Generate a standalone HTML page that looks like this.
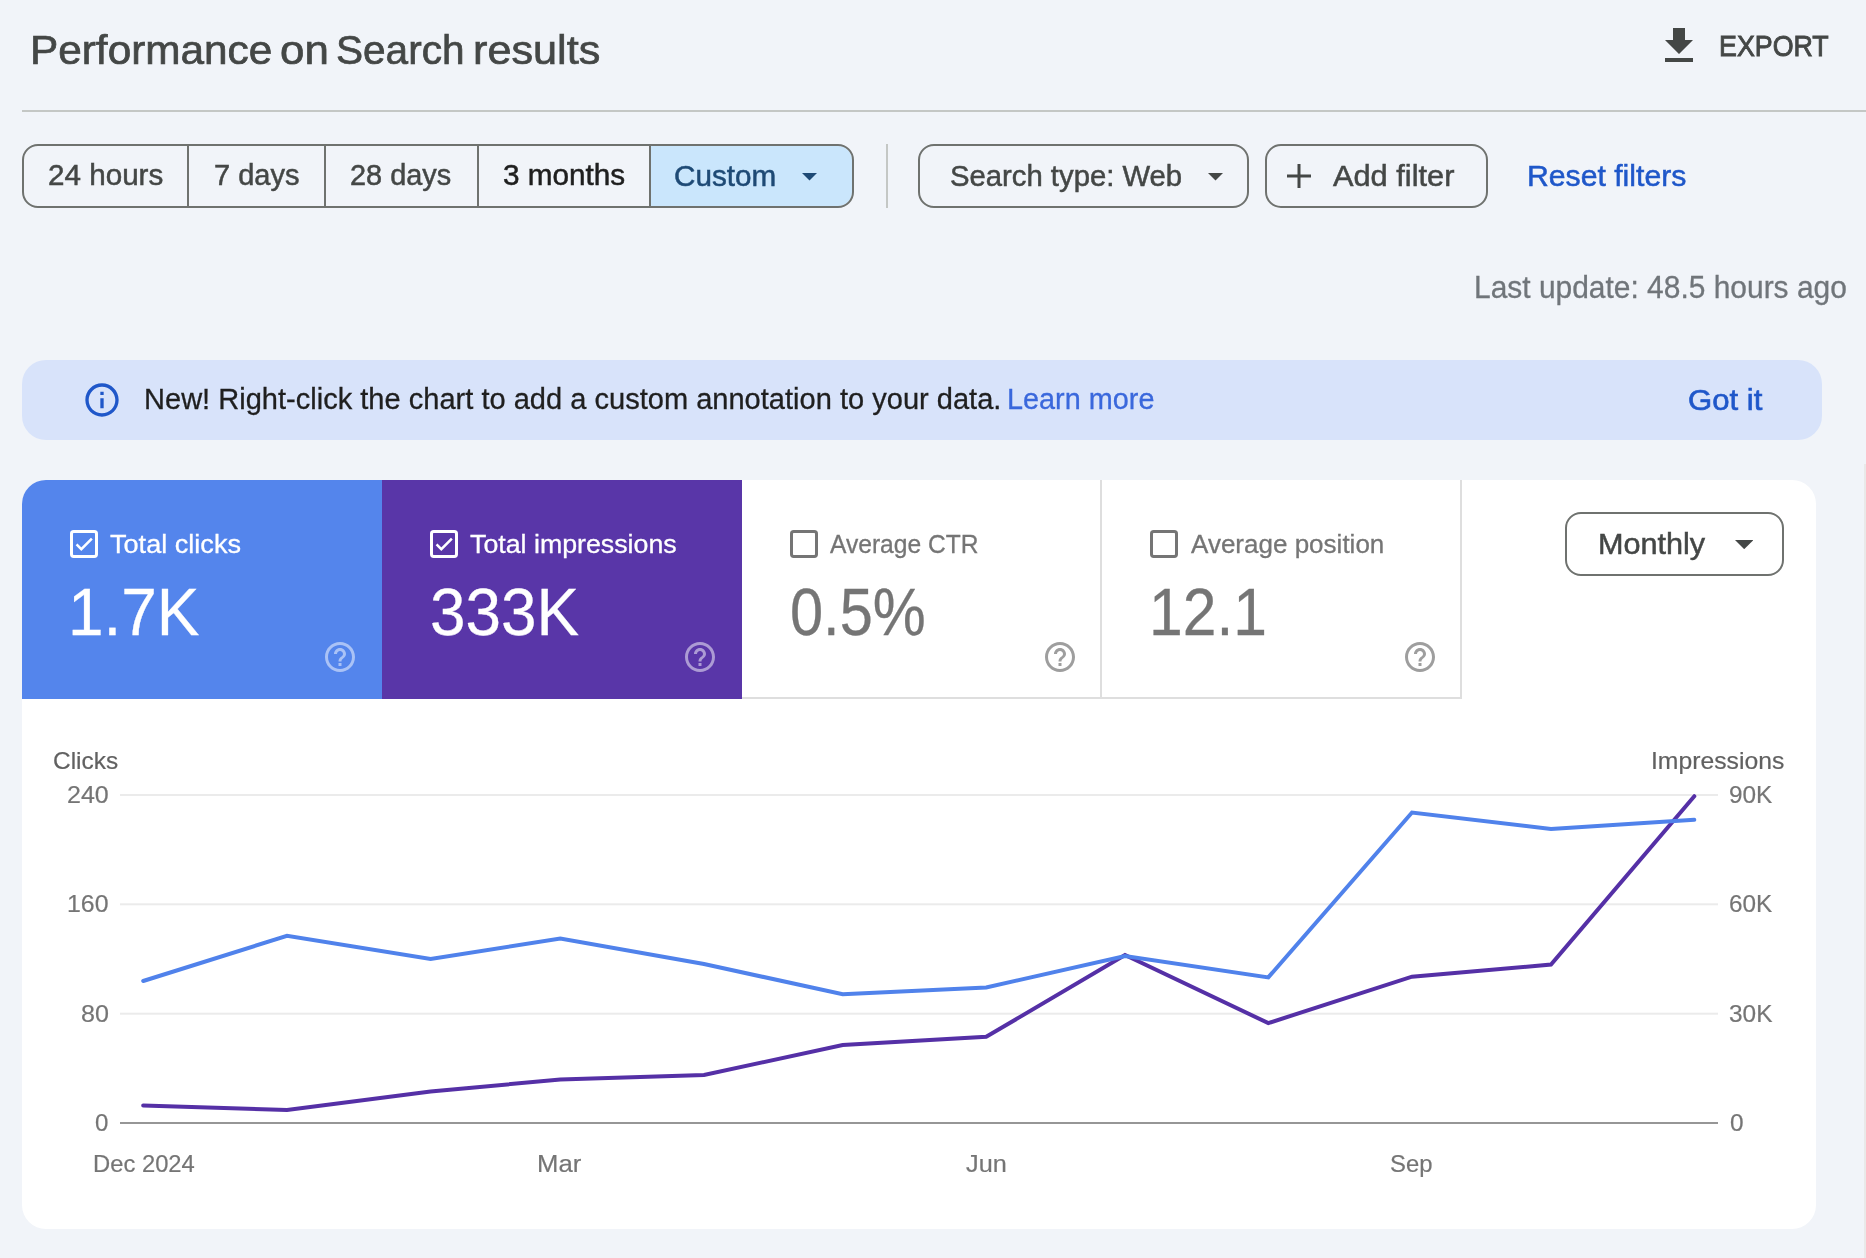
<!DOCTYPE html>
<html lang="en"><head><meta charset="utf-8"><title>Performance on Search results</title>
<style>
html,body{margin:0;padding:0}
body{width:1866px;height:1258px;position:relative;overflow:hidden;background:#f1f4f9;font-family:"Liberation Sans",sans-serif}
.a{position:absolute;display:block}
.t{position:absolute;white-space:nowrap;line-height:1;transform-origin:0 0}
.chip{position:absolute;box-sizing:border-box;border:2px solid #6f726f;border-radius:16px;height:64px}
</style></head><body>
<!-- header -->
<div class="a" style="left:22px;top:110px;width:1844px;height:2px;background:#c4c7c5"></div>
<svg class="a" style="left:1655px;top:22.200px" width="48" height="48" viewBox="0 0 24 24"><path fill="#444746" d="M19 9h-4V3H9v6H5l7 7 7-7zM5 18v2h14v-2H5z"/></svg>
<!-- date range segmented buttons -->
<div class="a" style="left:651px;top:146px;width:201px;height:60px;background:#cae6fc;border-radius:0 14px 14px 0"></div>
<div class="chip" style="left:22px;top:144px;width:832px"></div>
<div class="a" style="left:187px;top:146px;width:2px;height:60px;background:#6f726f"></div>
<div class="a" style="left:324px;top:146px;width:2px;height:60px;background:#6f726f"></div>
<div class="a" style="left:477px;top:146px;width:2px;height:60px;background:#6f726f"></div>
<div class="a" style="left:649px;top:146px;width:2px;height:60px;background:#6f726f"></div>
<svg class="a" style="left:802.40px;top:173px" width="15" height="7.5" viewBox="0 0 10 5"><path d="M0 0h10L5 5z" fill="#1e4a75"/></svg>
<div class="a" style="left:886px;top:144px;width:2px;height:64px;background:#c4c7c5"></div>
<div class="chip" style="left:918px;top:144px;width:331px"></div>
<svg class="a" style="left:1207.80px;top:173px" width="15" height="7.5" viewBox="0 0 10 5"><path d="M0 0h10L5 5z" fill="#444746"/></svg>
<div class="chip" style="left:1265px;top:144px;width:223px"></div>
<svg class="a" style="left:1287.300px;top:164.100px" width="24" height="24" viewBox="0 0 24 24"><path d="M12 0v24M0 12h24" stroke="#444746" stroke-width="3" fill="none"/></svg>
<!-- banner -->
<div class="a" style="left:22px;top:360px;width:1800px;height:80px;border-radius:24px;background:#d8e3fa"></div>
<svg class="a" style="left:81.700px;top:379.800px" width="40" height="40" viewBox="0 0 24 24"><path fill="#1f57c9" d="M11 7h2v2h-2zm0 4h2v6h-2zm1-9C6.480 2 2 6.480 2 12s4.480 10 10 10 10-4.480 10-10S17.520 2 12 2zm0 18c-4.410 0-8-3.590-8-8s3.590-8 8-8 8 3.590 8 8-3.590 8-8 8z"/></svg>
<!-- card -->
<div class="a" style="left:22px;top:480px;width:1794px;height:749px;border-radius:24px;background:#fff;overflow:hidden">
  <div class="a" style="left:0;top:0;width:360px;height:219px;background:#5485ec"></div>
  <div class="a" style="left:360px;top:0;width:360px;height:219px;background:#5936a8"></div>
  <div class="a" style="left:720px;top:217px;width:720px;height:2px;background:#dedede"></div>
  <div class="a" style="left:1078px;top:0;width:2px;height:219px;background:#dedede"></div>
  <div class="a" style="left:1438px;top:0;width:2px;height:219px;background:#dedede"></div>
</div>
<svg class="a" style="left:70px;top:530px" width="28" height="28" viewBox="0 0 28 28"><rect x="1.5" y="1.5" width="25" height="25" rx="2.200" ry="2.200" fill="none" stroke="#fff" stroke-width="3"/><path d="M6.570 14.310 L11.330 19.200 L21.860 8.550" fill="none" stroke="#fff" stroke-width="2.500"/></svg>
<svg class="a" style="left:430px;top:530px" width="28" height="28" viewBox="0 0 28 28"><rect x="1.5" y="1.5" width="25" height="25" rx="2.200" ry="2.200" fill="none" stroke="#fff" stroke-width="3"/><path d="M6.570 14.310 L11.330 19.200 L21.860 8.550" fill="none" stroke="#fff" stroke-width="2.500"/></svg>
<svg class="a" style="left:790px;top:530px" width="28" height="28" viewBox="0 0 28 28"><rect x="1.5" y="1.5" width="25" height="25" rx="2.200" ry="2.200" fill="none" stroke="#757575" stroke-width="3"/></svg>
<svg class="a" style="left:1150px;top:530px" width="28" height="28" viewBox="0 0 28 28"><rect x="1.5" y="1.5" width="25" height="25" rx="2.200" ry="2.200" fill="none" stroke="#757575" stroke-width="3"/></svg>
<svg class="a" style="left:322px;top:639px" width="36" height="36" viewBox="0 0 24 24"><path fill="#fff" fill-opacity="0.5" d="M11 18h2v-2h-2v2zm1-16C6.48 2 2 6.48 2 12s4.480 10 10 10 10-4.480 10-10S17.520 2 12 2zm0 18c-4.410 0-8-3.590-8-8s3.590-8 8-8 8 3.590 8 8-3.590 8-8 8zm0-14c-2.210 0-4 1.790-4 4h2c0-1.100.900-2 2-2s2 .900 2 2c0 2-3 1.750-3 5h2c0-2.250 3-2.500 3-5 0-2.210-1.790-4-4-4z"/></svg>
<svg class="a" style="left:682px;top:639px" width="36" height="36" viewBox="0 0 24 24"><path fill="#fff" fill-opacity="0.5" d="M11 18h2v-2h-2v2zm1-16C6.48 2 2 6.48 2 12s4.480 10 10 10 10-4.480 10-10S17.520 2 12 2zm0 18c-4.410 0-8-3.590-8-8s3.590-8 8-8 8 3.590 8 8-3.590 8-8 8zm0-14c-2.210 0-4 1.790-4 4h2c0-1.100.900-2 2-2s2 .900 2 2c0 2-3 1.750-3 5h2c0-2.250 3-2.500 3-5 0-2.210-1.790-4-4-4z"/></svg>
<svg class="a" style="left:1042px;top:639px" width="36" height="36" viewBox="0 0 24 24"><path fill="#9e9e9e" fill-opacity="1" d="M11 18h2v-2h-2v2zm1-16C6.48 2 2 6.48 2 12s4.480 10 10 10 10-4.480 10-10S17.520 2 12 2zm0 18c-4.410 0-8-3.590-8-8s3.590-8 8-8 8 3.590 8 8-3.590 8-8 8zm0-14c-2.210 0-4 1.790-4 4h2c0-1.100.900-2 2-2s2 .900 2 2c0 2-3 1.750-3 5h2c0-2.250 3-2.500 3-5 0-2.210-1.790-4-4-4z"/></svg>
<svg class="a" style="left:1402px;top:639px" width="36" height="36" viewBox="0 0 24 24"><path fill="#9e9e9e" fill-opacity="1" d="M11 18h2v-2h-2v2zm1-16C6.48 2 2 6.48 2 12s4.480 10 10 10 10-4.480 10-10S17.520 2 12 2zm0 18c-4.410 0-8-3.590-8-8s3.590-8 8-8 8 3.590 8 8-3.590 8-8 8zm0-14c-2.210 0-4 1.790-4 4h2c0-1.100.900-2 2-2s2 .900 2 2c0 2-3 1.750-3 5h2c0-2.250 3-2.500 3-5 0-2.210-1.790-4-4-4z"/></svg>
<div class="chip" style="left:1565px;top:512px;width:219px"></div>
<svg class="a" style="left:1734.50px;top:540.2px" width="18.4" height="9.2" viewBox="0 0 10 5"><path d="M0 0h10L5 5z" fill="#444746"/></svg>
<!-- chart -->
<svg class="a" style="left:0;top:700px" width="1866" height="500" viewBox="0 700 1866 500">
  <g fill="#ebebeb"><rect x="120" y="794" width="1598" height="2"/><rect x="120" y="903.300" width="1598" height="2"/><rect x="120" y="1012.700" width="1598" height="2"/></g>
  <rect x="120" y="1122" width="1598" height="2" fill="#969696"/>
  <polyline points="143.2,1105.4 287.0,1110.0 430.6,1091.4 560.3,1079.6 704.0,1075.0 842.7,1045.1 986.2,1036.8 1125.0,955.0 1268.3,1023.1 1412.0,976.7 1551.0,964.6 1694.3,796.2" fill="none" stroke="#5530a6" stroke-width="4" stroke-linejoin="miter" stroke-linecap="round"/>
  <polyline points="143.2,981.0 287.0,935.8 430.6,959.0 560.3,938.6 704.0,964.0 842.7,994.3 986.2,987.5 1125.0,956.0 1268.3,977.4 1412.0,812.5 1551.0,829.0 1694.3,819.8" fill="none" stroke="#5082eb" stroke-width="4" stroke-linejoin="miter" stroke-linecap="round"/>
</svg>
<!-- scrollbar sliver -->
<div class="a" style="left:1864px;top:464px;width:2px;height:794px;background:#e9e9e9"></div>
<!-- text -->
<div class="a" id="txt" style="left:0;top:0;width:1866px;height:1258px;will-change:transform">
<h1 style="margin:0;font-weight:400"><span class="t" style="left:30px;top:30px;font-size:40.5px;color:#444746;-webkit-text-stroke:0.7px #444746;transform:scaleX(1.0452)">Performance</span> <span class="t" style="left:280px;top:30px;font-size:40.5px;color:#444746;-webkit-text-stroke:0.7px #444746;transform:scaleX(1.0827)">on</span> <span class="t" style="left:336px;top:30px;font-size:40.5px;color:#444746;-webkit-text-stroke:0.7px #444746;transform:scaleX(1.0012)">Search</span> <span class="t" style="left:473px;top:30px;font-size:40.5px;color:#444746;-webkit-text-stroke:0.7px #444746;transform:scaleX(1.0672)">results</span></h1>
<div class="t" style="left:1719px;top:32px;font-size:29px;color:#444746;-webkit-text-stroke:0.9px #444746;transform:scaleX(0.9242)">EXPORT</div>
<div class="t" style="left:48px;top:161px;font-size:29px;color:#444746;-webkit-text-stroke:0.5px #444746;transform:scaleX(1.0216)">24 hours</div>
<div class="t" style="left:214px;top:161px;font-size:29px;color:#444746;-webkit-text-stroke:0.5px #444746;transform:scaleX(1.0010)">7 days</div>
<div class="t" style="left:350px;top:161px;font-size:29px;color:#444746;-webkit-text-stroke:0.5px #444746;transform:scaleX(0.9963)">28 days</div>
<div class="t" style="left:503px;top:161px;font-size:29px;color:#1f1f1f;-webkit-text-stroke:0.5px #1f1f1f;transform:scaleX(1.0246)">3 months</div>
<div class="t" style="left:674px;top:162px;font-size:29px;color:#1e4a75;-webkit-text-stroke:0.5px #1e4a75;transform:scaleX(1.0229)">Custom</div>
<div class="t" style="left:950px;top:162px;font-size:29px;color:#444746;-webkit-text-stroke:0.5px #444746;transform:scaleX(1.0093)">Search type: Web</div>
<div class="t" style="left:1333px;top:162px;font-size:29px;color:#444746;-webkit-text-stroke:0.5px #444746;transform:scaleX(1.0607)">Add filter</div>
<div class="t" style="left:1527px;top:162px;font-size:29px;color:#1f57c9;-webkit-text-stroke:0.5px #1f57c9;transform:scaleX(1.0408)">Reset filters</div>
<div class="t" style="left:1474px;top:272px;font-size:30.5px;color:#70757a;-webkit-text-stroke:0.3px #70757a;transform:scaleX(0.9816)">Last update: 48.5 hours ago</div>
<div class="t" style="left:144px;top:385px;font-size:28.6px;color:#1f1f1f;-webkit-text-stroke:0.3px #1f1f1f;transform:scaleX(1.0159)">New! Right-click the chart to add a custom annotation to your data.</div>
<div class="t" style="left:1007px;top:385px;font-size:28.6px;color:#3a68dc;-webkit-text-stroke:0.3px #3a68dc;transform:scaleX(1.0082)">Learn more</div>
<div class="t" style="left:1688px;top:386px;font-size:29px;color:#1f57c9;-webkit-text-stroke:0.6px #1f57c9;transform:scaleX(1.0722)">Got it</div>
<div class="t" style="left:110px;top:531px;font-size:26.5px;color:#fff;-webkit-text-stroke:0.3px #fff;transform:scaleX(1.0224)">Total clicks</div>
<div class="t" style="left:68px;top:579px;font-size:66px;color:#fff;-webkit-text-stroke:0.3px #fff;transform:scaleX(0.9683)">1.7K</div>
<div class="t" style="left:470px;top:531px;font-size:26.5px;color:#fff;-webkit-text-stroke:0.3px #fff;transform:scaleX(1.0095)">Total impressions</div>
<div class="t" style="left:430px;top:579px;font-size:66px;color:#fff;-webkit-text-stroke:0.3px #fff;transform:scaleX(0.9665)">333K</div>
<div class="t" style="left:830px;top:531px;font-size:26.5px;color:#757575;-webkit-text-stroke:0.3px #757575;transform:scaleX(0.9278)">Average CTR</div>
<div class="t" style="left:790px;top:579px;font-size:66px;color:#757575;-webkit-text-stroke:0.3px #757575;transform:scaleX(0.9019)">0.5%</div>
<div class="t" style="left:1191px;top:531px;font-size:26.5px;color:#757575;-webkit-text-stroke:0.3px #757575;transform:scaleX(0.9817)">Average position</div>
<div class="t" style="left:1149px;top:579px;font-size:66px;color:#757575;-webkit-text-stroke:0.3px #757575;transform:scaleX(0.9183)">12.1</div>
<div class="t" style="left:1598px;top:530px;font-size:29px;color:#444746;-webkit-text-stroke:0.5px #444746;transform:scaleX(1.0552)">Monthly</div>
<div class="t" style="left:53px;top:749px;font-size:24.5px;color:#616161;-webkit-text-stroke:0.2px #616161;transform:scaleX(0.9974)">Clicks</div>
<div class="t" style="left:1651px;top:749px;font-size:24.5px;color:#616161;-webkit-text-stroke:0.2px #616161;transform:scaleX(1.0089)">Impressions</div>
<div class="t" style="left:67px;top:783px;font-size:24.8px;color:#757575;-webkit-text-stroke:0.2px #757575;transform:scaleX(1.0086)">240</div>
<div class="t" style="left:67px;top:892px;font-size:24.8px;color:#757575;-webkit-text-stroke:0.2px #757575;transform:scaleX(1.0028)">160</div>
<div class="t" style="left:81px;top:1002px;font-size:24.8px;color:#757575;-webkit-text-stroke:0.2px #757575;transform:scaleX(1.0120)">80</div>
<div class="t" style="left:95px;top:1111px;font-size:24.8px;color:#757575;-webkit-text-stroke:0.2px #757575;transform:scaleX(0.9714)">0</div>
<div class="t" style="left:1729px;top:783px;font-size:24.8px;color:#757575;-webkit-text-stroke:0.2px #757575;transform:scaleX(0.9810)">90K</div>
<div class="t" style="left:1729px;top:892px;font-size:24.8px;color:#757575;-webkit-text-stroke:0.2px #757575;transform:scaleX(0.9793)">60K</div>
<div class="t" style="left:1729px;top:1002px;font-size:24.8px;color:#757575;-webkit-text-stroke:0.2px #757575;transform:scaleX(0.9836)">30K</div>
<div class="t" style="left:1730px;top:1111px;font-size:24.8px;color:#757575;-webkit-text-stroke:0.2px #757575;transform:scaleX(0.9846)">0</div>
<div class="t" style="left:93px;top:1152px;font-size:24.8px;color:#757575;-webkit-text-stroke:0.2px #757575;transform:scaleX(0.9592)">Dec 2024</div>
<div class="t" style="left:537px;top:1152px;font-size:24.8px;color:#757575;-webkit-text-stroke:0.2px #757575;transform:scaleX(1.0361)">Mar</div>
<div class="t" style="left:966px;top:1152px;font-size:24.8px;color:#757575;-webkit-text-stroke:0.2px #757575;transform:scaleX(1.0193)">Jun</div>
<div class="t" style="left:1390px;top:1152px;font-size:24.8px;color:#757575;-webkit-text-stroke:0.2px #757575;transform:scaleX(0.9615)">Sep</div>
</div>
</body></html>
